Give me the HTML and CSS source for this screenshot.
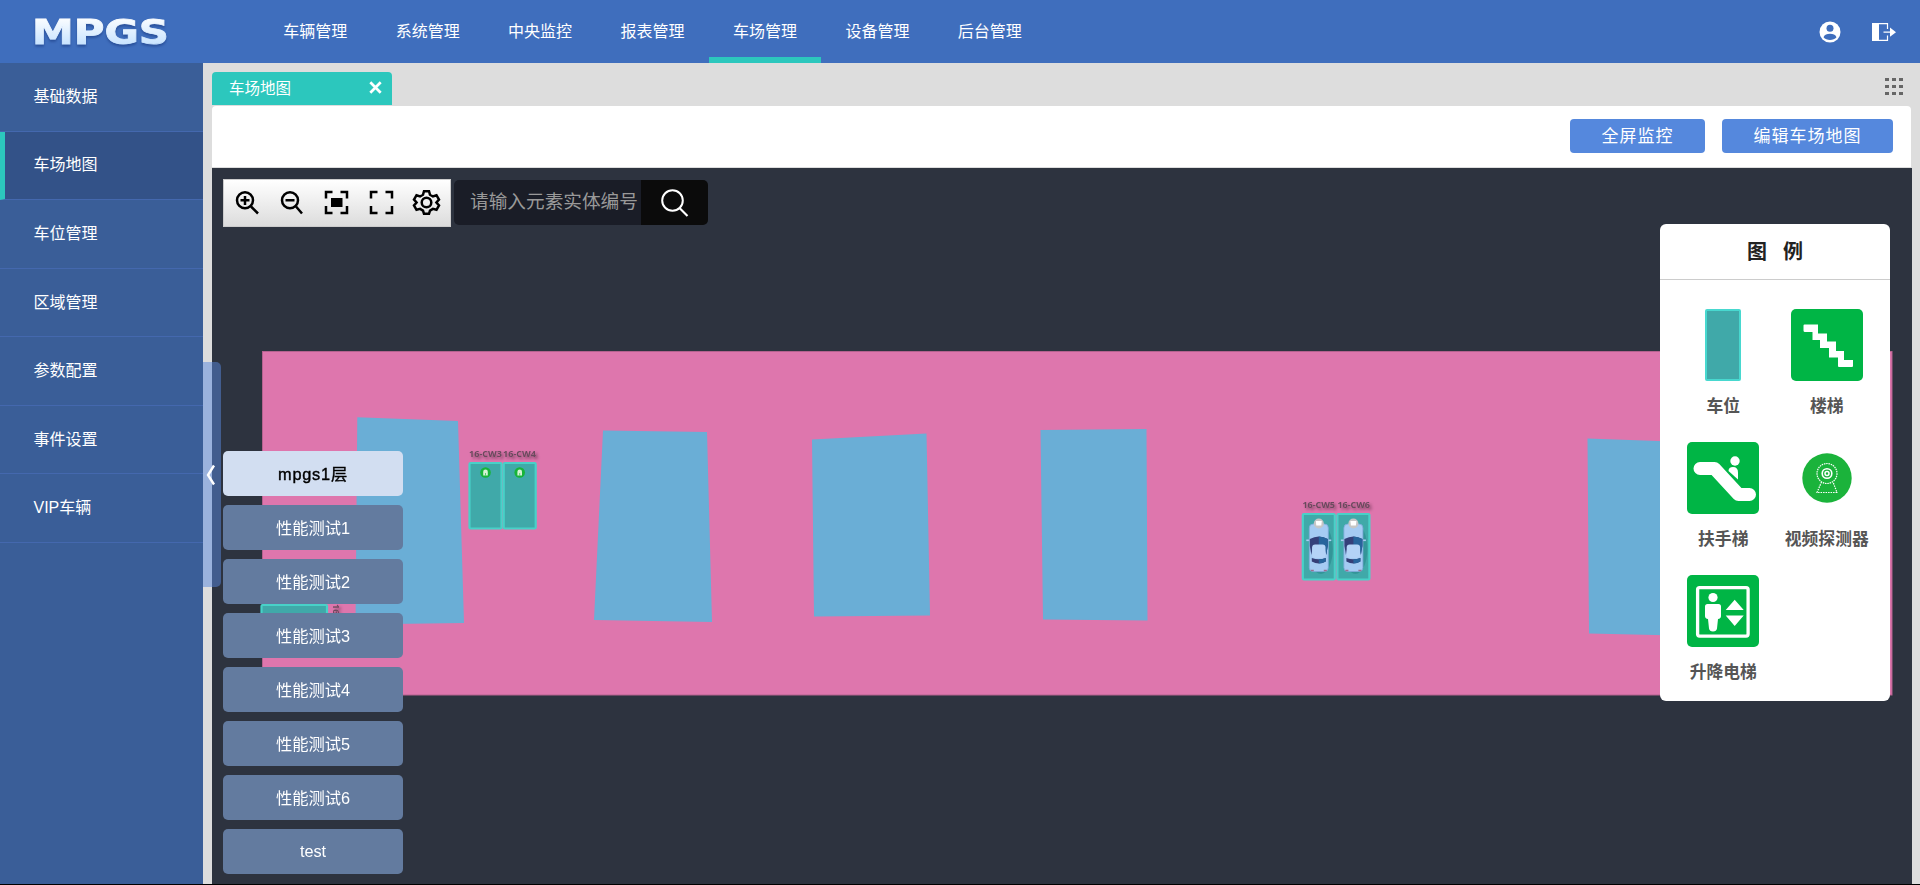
FILE: index.html
```html
<!DOCTYPE html>
<html lang="zh-CN">
<head>
<meta charset="utf-8">
<title>MPGS</title>
<link rel="stylesheet" href="styles.css">
</head>
<body>
<header class="header">
  <svg class="logo" width="140" height="32" viewBox="0 0 140 32" role="img" aria-label="MPGS">
    <defs>
      <linearGradient id="lg" x1="0" y1="0" x2="0" y2="1"><stop offset="0.1" stop-color="#fff"/><stop offset="1" stop-color="#b9dcff"/></linearGradient>
    </defs>
    <text class="logo-text" x="-1" y="27" textLength="137" lengthAdjust="spacingAndGlyphs" fill="url(#lg)" stroke="url(#lg)" stroke-width=".8">MPGS</text>
  </svg>
  <nav class="nav">
    <a class="nav-item">车辆管理</a>
    <a class="nav-item">系统管理</a>
    <a class="nav-item">中央监控</a>
    <a class="nav-item">报表管理</a>
    <a class="nav-item active">车场管理</a>
    <a class="nav-item">设备管理</a>
    <a class="nav-item">后台管理</a>
  </nav>
  <div class="header-icons">
    <svg width="22" height="22" viewBox="0 0 22 22"><circle cx="11" cy="11" r="10.500" fill="#fff"/><circle cx="11" cy="7.200" r="3.500" fill="#3f6ebd"/><path d="M4.500 16.200C5.500 13.500 8 12.700 11 12.700s5.500.8 6.500 3.500C16 18.100 13.500 18.900 11 18.900s-5-.8-6.500-2.700z" fill="#3f6ebd"/></svg>
    <svg width="24" height="20" viewBox="0 0 24 20"><path d="M0 1h7v18H0z" fill="#fff"/><path d="M6 1.600h9.500V7M6 18.400h9.500V13.500M11.500 10.200h8" fill="none" stroke="#fff" stroke-width="1.200"/><path d="M18 5.600l6 4.600-6 4.600z" fill="#fff"/></svg>
  </div>
</header>
<div class="body">
  <aside class="sidebar">
    <a class="side-item">基础数据</a>
    <a class="side-item active">车场地图</a>
    <a class="side-item">车位管理</a>
    <a class="side-item">区域管理</a>
    <a class="side-item">参数配置</a>
    <a class="side-item">事件设置</a>
    <a class="side-item">VIP车辆</a>
    <div class="collapse"><svg width="10" height="22" viewBox="0 0 10 22"><path d="M8 1.500L2 11l6 9.500" fill="none" stroke="#fff" stroke-width="2.400"/></svg></div>
  </aside>
  <main class="main">
    <div class="tabs">
      <div class="tab"><span>车场地图</span><svg width="13" height="13" viewBox="0 0 12 12"><path d="M1.200 1.200l9.600 9.600M10.800 1.200l-9.600 9.600" stroke="#fff" stroke-width="2.500"/></svg></div>
      <svg class="grid-icon" width="18" height="18" viewBox="0 0 18 18" fill="#666"><path d="M0 0h4v3H0zM7 0h4v3H7zM14 0h4v3h-4zM0 7h4v3H0zM7 7h4v3H7zM14 7h4v3h-4zM0 14h4v3H0zM7 14h4v3H7zM14 14h4v3h-4z"/></svg>
    </div>
    <div class="actions">
      <button class="btn btn-full">全屏监控</button>
      <button class="btn btn-edit">编辑车场地图</button>
    </div>
    <section class="map">
      <svg class="floor-plan" width="1700" height="716" viewBox="212 168 1700 716">
        <defs>
          <filter id="ts" x="-20%" y="-20%" width="150%" height="180%"><feDropShadow dx="2" dy="2" stdDeviation="1.500" flood-color="#000" flood-opacity=".4"/></filter>
          <g id="slot"><rect x="1" y="1" width="32" height="65.500" rx="1" fill="#40a9a9" stroke="#48d1c8" stroke-width="2.200"/></g>
          <g id="lamp"><circle cx="17" cy="10.500" r="5.300" fill="#17b43a"/><path d="M14.700 13.500V9.800q0-2.200 2.300-2.200t2.300 2.200v3.700z" fill="#d5f3d5"/><path d="M17 11v3" stroke="#5fc873" stroke-width="1"/></g>
          <g id="car">
            <ellipse cx="19" cy="36" rx="12" ry="25" fill="#1d6f79" opacity=".35"/>
            <path d="M4.500 27.300h25" stroke="#a9cdf2" stroke-width="1.600"/>
            <rect x="7.500" y="11" width="19" height="47.500" rx="4" fill="#a5cbf3" stroke="#7fabdb" stroke-width=".8"/>
            <path d="M8 26q9-5 18 0v7q-1 5-1.500 9l-1.500-8q-6-2-12 0l-1.500 8q-.5-4-1.500-9z" fill="#35407a"/>
            <path d="M17 23.500q5 .3 9 2.500v7q-1 5-1.500 9l-1.500-8-6-1.500z" fill="#27649c"/>
            <rect x="10.300" y="31.500" width="13.400" height="13.500" rx="3" fill="#b4d3f7"/>
            <path d="M10 45q7 2.500 14 0v3.500q-7 4-14 0z" fill="#353f77"/><path d="M17 46.200q4 0 7-1.200v3.500q-3 1.800-7 2z" fill="#27649c"/>
            <path d="M9 57.500h3M22 57.500h3" stroke="#9a6f8f" stroke-width="1.500"/>
            <circle cx="17" cy="10.500" r="5" fill="#c6c6c6"/><path d="M14 8h6l-.5 4.500h-5z" fill="#fff"/>
          </g>
        </defs>
        <rect x="262.500" y="351.500" width="1629.500" height="343.500" fill="#de76ad" stroke="#b5628f"/>
        <g fill="#6aaed6">
          <path d="M357.300 417.300L458 421l6 202-108.500 1.500z"/>
          <path d="M603 430.500l104 1.500 5 190-118-2z"/>
          <path d="M812 439.500l114.500-6 3.500 182-116 1z"/>
          <path d="M1040.500 430l106-1 1 191.500-104.500-1z"/>
          <path d="M1587.500 438.500L1700 442.500v193.500l-111-2.500z"/>
        </g>
        <use href="#slot" transform="translate(260.500 638) rotate(-90)"/>
        <use href="#slot" x="468.500" y="462"/><use href="#lamp" x="468.500" y="462"/>
        <use href="#slot" x="502.700" y="462"/><use href="#lamp" x="502.700" y="462"/>
        <use href="#slot" x="1301.800" y="513"/><use href="#car" x="1301.800" y="513"/>
        <use href="#slot" x="1336.400" y="513"/><use href="#car" x="1336.400" y="513"/>
        <g class="slot-label" filter="url(#ts)">
          <text x="469" y="456.700" textLength="33">16-CW3</text><text x="503" y="456.700" textLength="33">16-CW4</text>
          <text x="1302.500" y="507.700" textLength="32.500">16-CW5</text><text x="1337.500" y="507.700" textLength="32.500">16-CW6</text>
          <text transform="translate(333 604) rotate(90)">16-CW</text>
        </g>
      </svg>
      <div class="map-tools">
        <div class="toolbar">
          <svg width="226" height="46" viewBox="224 180 226 46" fill="none" stroke="#000" stroke-width="2.500">
            <circle cx="245" cy="200.300" r="8"/><path d="M251 206.500l7 7M240.500 200.300h9M245 196v9"/>
            <circle cx="290" cy="200.300" r="8"/><path d="M296 206.500l6 7M285.500 200.300h9"/>
            <path d="M326 198.500v-6.500h6.500M340.500 192h6.500v6.500M326 206v7h6.500M340.500 213h6.500v-7"/><path d="M331 198h11.500v9H331z" fill="#000" stroke="none"/>
            <path d="M371 198.500v-6.500h6.500M385.500 192h6.500v6.500M371 206v7h6.500M385.500 213h6.500v-7"/>
            <circle cx="426.500" cy="202.500" r="4.800"/>
            <path d="M424 191.200h5l1 3.600 2.900 1.700 3.600-1.300 2.500 4.300-2.600 3 2.600 3-2.500 4.300-3.600-.9-2.900 1.700-1 3.200h-5l-1-3.200-2.900-1.700-3.600.9-2.500-4.300 2.600-3-2.600-3 2.500-4.300 3.600 1.300 2.900-1.700z"/>
          </svg>
        </div>
        <div class="search">
          <input class="search-input" placeholder="请输入元素实体编号">
          <button class="search-btn"><svg width="28" height="28" viewBox="0 0 28 28"><circle cx="11.500" cy="11.500" r="10.300" fill="none" stroke="#fff" stroke-width="2"/><path d="M18.500 19l8 8" stroke="#fff" stroke-width="2.200"/></svg></button>
        </div>
      </div>
      <div class="floors">
        <button class="floor active">mpgs1层</button>
        <button class="floor">性能测试1</button>
        <button class="floor">性能测试2</button>
        <button class="floor">性能测试3</button>
        <button class="floor">性能测试4</button>
        <button class="floor">性能测试5</button>
        <button class="floor">性能测试6</button>
        <button class="floor">test</button>
      </div>
      <div class="legend">
        <div class="legend-title">图 &nbsp;例</div>
        <div class="legend-grid">
          <div class="legend-item"><svg width="72" height="72"><rect x="19" y="1" width="34" height="70" rx="1" fill="#40a9a9" stroke="#48d8cf" stroke-width="2"/></svg><span>车位</span></div>
          <div class="legend-item"><svg width="72" height="72"><rect width="72" height="72" rx="5" fill="#00b545"/><path d="M13.500 15.500h13.500v9h9v8h9v9.500h8v9h9V57q0 1-1 1H48q-1 0-1-1v-8.500h-9v-9.500h-9v-8h-7.500V23H14q-1.500 0-1.500-1.500v-5q0-1 1-1z" fill="#fff"/></svg><span>楼梯</span></div>
          <div class="legend-item"><svg width="72" height="72"><rect width="72" height="72" rx="5" fill="#00b545"/><path d="M13 26.500h14.500l24 26H62.500" fill="none" stroke="#fff" stroke-width="13" stroke-linecap="round" stroke-linejoin="round"/><circle cx="48" cy="19" r="4.700" fill="#fff"/><path d="M41.500 29q0-4 4.500-4 5 0 5 5.500V37.500z" fill="#fff"/></svg><span>扶手梯</span></div>
          <div class="legend-item"><svg width="72" height="72" fill="none" stroke="#fff"><circle cx="36" cy="36" r="24.700" fill="#1bb33b" stroke="none"/><circle cx="36" cy="31.500" r="10" stroke-width="1.200" stroke-dasharray="1.500 .8"/><circle cx="36" cy="31.500" r="4.800" stroke-width="1.600"/><circle cx="36" cy="31.500" r="2" stroke-width="1.500"/><path d="M30.500 40l-4.500 10.500h20L42 40" stroke-width="1.200" stroke-dasharray="1.500 1"/></svg><span>视频探测器</span></div>
          <div class="legend-item"><svg width="72" height="72"><rect width="72" height="72" rx="5" fill="#00b545"/><rect x="10.600" y="12.600" width="50.500" height="48.500" rx="2" fill="none" stroke="#fff" stroke-width="3.300"/><g fill="#fff"><circle cx="26" cy="22.500" r="4.600"/><path d="M20.500 29h11q2.500 0 2.500 2.500V41q0 2.500-3 3L30 53.500q-.5 3-4 3t-4-3L21 44q-3-.5-3-3v-9.500q0-2.500 2.500-2.500z"/><path d="M47.700 24.700l9 10.300H38.700zM38.700 40.500h18l-9 10.500z"/></g></svg><span>升降电梯</span></div>
        </div>
      </div>
    </section>
  </main>
</div>
<div class="bottom-edge"></div>
</body>
</html>
```
FILE: styles.css
```css
* { box-sizing: border-box; }
body {
  margin: 0;
  height: 885px;
  overflow: hidden;
  display: flex;
  flex-direction: column;
  background: #ddd;
  font: 16px "Liberation Sans", "Noto Sans CJK SC", sans-serif;
}
button, input { font-family: inherit; border: 0; padding: 0; outline: 0; }
svg { display: block; flex: none; }

.header { height: 63px; flex: none; display: flex; align-items: stretch; background: #3f6ebd; color: #fff; padding: 0 24px 0 33px; }
.logo { margin-top: 17px; width: 140px; overflow: visible; filter: drop-shadow(0 2px 1px rgba(20, 50, 120, .5)); }
.logo-text { font: bold 34px "DejaVu Sans", sans-serif; }
.nav { display: flex; margin-left: 86px; }
.nav-item { width: 112.450px; line-height: 64px; text-align: center; }
.nav-item.active { box-shadow: inset 0 -6px #2cc7bd; }
.header-icons { margin-left: auto; display: flex; align-items: center; gap: 31px; }

.body { flex: 1; min-height: 0; display: flex; }
.sidebar { width: 203px; flex: none; background: #3a5e98; position: relative; }
.side-item { display: block; height: 68.570px; line-height: 68px; padding-left: 33.500px; color: #fff; border-bottom: 1px solid #4468ae; }
.side-item.active { background: #335288; border-left: 5px solid #2cc7bd; padding-left: 28.500px; line-height: 66px; }
.collapse { position: absolute; z-index: 2; left: 203px; top: 299px; width: 18px; height: 225px; border-radius: 0 5px 5px 0; background: rgba(87, 136, 222, .5); display: flex; align-items: center; padding-left: 3px; }

.main { flex: 1; min-width: 0; padding: 9px 8px 0 9px; display: flex; flex-direction: column; }
.tabs { height: 34px; flex: none; display: flex; justify-content: space-between; }
.tab { width: 180px; height: 33px; border-radius: 4px 4px 0 0; background: #2cc7bd; color: #fff; display: flex; align-items: center; justify-content: space-between; padding: 0 10px 3px 17px; font-size: 15.500px; }
.grid-icon { margin: 6px 9px 0 0; }
.actions { height: 61px; flex: none; margin: 0 1px 1px 0; border-radius: 4px 4px 0 0; background: #fff; display: flex; justify-content: flex-end; gap: 17px; padding: 13px 18px 0 0; }
.btn { height: 34px; border-radius: 4px; background: #5588dd; color: #fff; font-size: 17px; letter-spacing: 1px; padding-bottom: 3px; }
.btn-full { width: 135px; }
.btn-edit { width: 171px; }

.map { flex: 1; min-height: 0; position: relative; overflow: hidden; background: #2d333f; }
.floor-plan { position: absolute; left: 0; top: 0; }
.slot-label { font: bold 9px "Open Sans", sans-serif; fill: #6a4a5d; }
.map-tools { position: absolute; left: 11px; top: 11px; display: flex; gap: 3px; }
.toolbar { width: 228px; height: 48px; border: 1px solid #ccc; background: linear-gradient(#fff, #dcdcdc); }
.search { display: flex; width: 254px; height: 45px; margin-top: 1px; border-radius: 5px; overflow: hidden; }
.search-input { width: 187px; background: #1a1d27; color: #fff; padding: 0 0 1px 16px; font-size: 18.670px; }
.search-input::placeholder { color: #999; }
.search-btn { flex: 1; background: #0b0b0b; display: flex; align-items: center; justify-content: center; }
.floors { position: absolute; left: 11px; top: 283px; width: 180px; display: flex; flex-direction: column; gap: 9px; }
.floor { height: 45px; border-radius: 5px; background: #637b9f; color: #fff; font-size: 16.300px; padding-bottom: 2px; }
.floor:last-child { padding-bottom: 0; }
.floor.active { background: #d2def1; color: #000; letter-spacing: .8px; -webkit-text-stroke: .4px #000; }
.legend { position: absolute; left: 1448px; top: 56px; width: 230px; height: 477px; border-radius: 6px; background: #fff; }
.legend-title { height: 56px; line-height: 57px; border-bottom: 1px solid #ccc; text-align: center; font-size: 20px; word-spacing: 2.500px; font-weight: bold; color: #222; }
.legend-grid { display: grid; grid-template-columns: 103.500px 103.500px; grid-auto-rows: 133px; padding: 29px 0 0 11.500px; }
.legend-item { display: flex; flex-direction: column; align-items: center; gap: 14px; white-space: nowrap; font-size: 16.800px; line-height: 24px; font-weight: bold; color: #555; }
.bottom-edge { height: 1px; flex: none; background: #000; }
```
